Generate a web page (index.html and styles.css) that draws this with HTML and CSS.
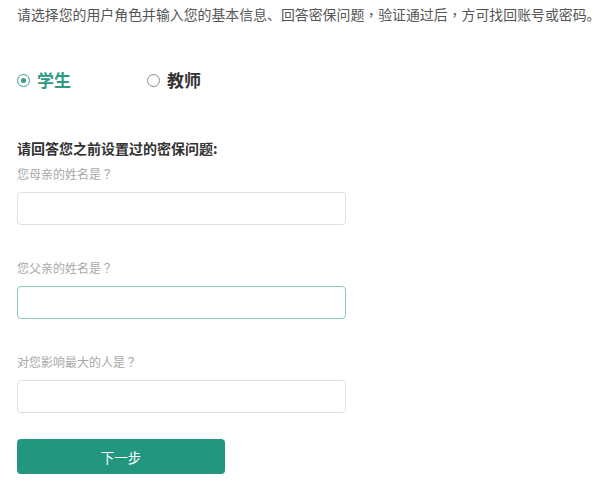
FILE: index.html
```html
<!DOCTYPE html>
<html lang="zh-CN">
<head>
<meta charset="utf-8">
<title>找回账号或密码</title>
<link rel="stylesheet" href="styles.css">
</head>
<body>
<div class="page">
  <p class="intro">请选择您的用户角色并输入您的基本信息、回答密保问题<span class="punct" lang="zh-TW">，</span>验证通过后<span class="punct" lang="zh-TW">，</span>方可找回账号或密码。</p>
  <div class="roles">
    <label class="role role-active"><span class="radio radio-on"></span><span class="role-name">学生</span></label>
    <label class="role"><span class="radio"></span><span class="role-name">教师</span></label>
  </div>
  <h3 class="heading">请回答您之前设置过的密保问题:</h3>
  <div class="field">
    <div class="label">您母亲的姓名是<span class="punct" lang="zh-TW">？</span></div>
    <div class="input"></div>
  </div>
  <div class="field">
    <div class="label">您父亲的姓名是<span class="punct" lang="zh-TW">？</span></div>
    <div class="input input-focus"></div>
  </div>
  <div class="field">
    <div class="label">对您影响最大的人是<span class="punct" lang="zh-TW">？</span></div>
    <div class="input"></div>
  </div>
  <button class="next">下一步</button>
</div>
</body>
</html>
```
FILE: styles.css
```css
html, body {
  margin: 0;
  padding: 0;
  background: #ffffff;
}
body {
  font-family: "Noto Sans CJK SC", "Noto Sans", sans-serif;
  text-spacing-trim: space-all;
}
.page {
  padding: 4px 0 0 17px;
  display: flex;
  flex-direction: column;
  align-items: flex-start;
}
.punct {
  font-family: "Noto Sans CJK TC", sans-serif;
}
.intro {
  margin: 0;
  font-size: 13.9px;
  line-height: 20px;
  color: #555555;
  white-space: nowrap;
}
.roles {
  margin-top: 44px;
  height: 24px;
  display: flex;
  align-items: center;
}
.role {
  display: flex;
  align-items: center;
  gap: 7px;
  width: 130px;
}
.radio {
  width: 11px;
  height: 11px;
  border: 1.6px solid #8a8a8a;
  border-radius: 50%;
  display: flex;
  align-items: center;
  justify-content: center;
  box-sizing: content-box;
}
.radio-on {
  border-color: #3a9f89;
}
.radio-on::after {
  content: "";
  width: 5px;
  height: 5px;
  border-radius: 50%;
  background: #3a9f89;
}
.role-name {
  font-size: 17px;
  line-height: 24px;
  font-weight: 700;
  color: #333333;
}
.role-active .role-name {
  color: #2f9a82;
}
.heading {
  margin: 46px 0 0 0;
  font-size: 14px;
  line-height: 20px;
  font-weight: 700;
  color: #333333;
}
.field {
  display: flex;
  flex-direction: column;
  margin-top: 7px;
}
.field + .field {
  margin-top: 34px;
}
.label {
  font-size: 12px;
  line-height: 18px;
  color: #a8a8a8;
}
.input {
  margin-top: 9px;
  width: 327px;
  height: 31px;
  border: 1px solid #e0e0e0;
  border-radius: 4px;
  background: #ffffff;
}
.input-focus {
  border-color: #88cbbb;
}
.next {
  margin-top: 26px;
  width: 208px;
  height: 35px;
  border: none;
  border-radius: 4px;
  background: #22967f;
  color: #ffffff;
  font-family: "Noto Sans CJK SC", "Noto Sans", sans-serif;
  font-size: 13.5px;
  padding: 0;
}
```
